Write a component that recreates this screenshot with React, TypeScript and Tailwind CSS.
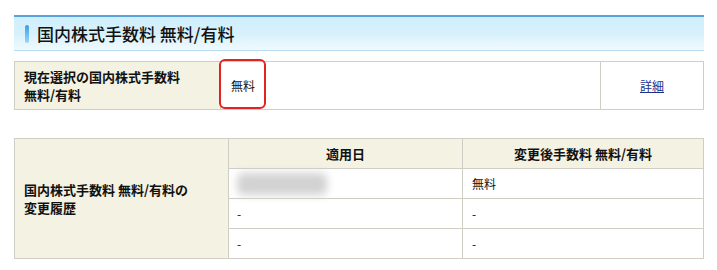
import React from 'react';

const font = { fontFamily: '"Noto Sans CJK JP", "Liberation Sans", sans-serif' };

const History: React.FC = () => {
  const rows = [
    { date: null, fee: '無料' },
    { date: '-', fee: '-' },
    { date: '-', fee: '-' },
  ];
  return (
    <table className="mt-[28px] w-[690px] table-fixed border-collapse text-[12px] text-[#111]">
      <colgroup>
        <col className="w-[214px]" />
        <col className="w-[234px]" />
        <col />
      </colgroup>
      <tbody>
        <tr className="h-[30px]">
          <th
            rowSpan={4}
            className="border border-[#cfcdc4] bg-[#f4f2e3] px-[9px] text-left align-middle text-[13px] font-bold leading-[18px]"
          >
            国内株式手数料 無料/有料の
            <br />
            変更履歴
          </th>
          <th className="border border-[#cfcdc4] bg-[#f4f2e3] text-center text-[13px] font-bold">適用日</th>
          <th className="border border-[#cfcdc4] bg-[#f4f2e3] text-center text-[13px] font-bold">
            変更後手数料 無料/有料
          </th>
        </tr>
        {rows.map((r, i) => (
          <tr key={i} className="h-[30px]">
            <td className="border border-[#cfcdc4] px-[8px]">
              {r.date === null ? (
                <div className="h-[22px] w-[90px] rounded-[6px] bg-[#d2d2d2] blur-[4px]" />
              ) : (
                r.date
              )}
            </td>
            <td className="border border-[#cfcdc4] px-[9px]">{r.fee}</td>
          </tr>
        ))}
      </tbody>
    </table>
  );
};

export default function App() {
  return (
    <div className="min-h-[270px] w-[717px] bg-white pl-[14px] pt-[15px]" style={font}>
      <div className="flex h-[36px] w-[690px] items-center border-t-2 border-b border-t-[#5aa3da] border-b-[#b8dcf0] bg-gradient-to-b from-[#d0effc] via-[#d6f1fc] to-[#f0f9fe] pl-[11px]">
        <div className="h-[18px] w-[4px] rounded-[2px] bg-gradient-to-b from-[#3f9be0] to-[#9ad7f6]" />
        <h1 className="ml-[8px] text-[17px] font-medium leading-none text-[#111]">国内株式手数料 無料/有料</h1>
      </div>

      <div className="relative mt-[10px]">
        <table className="w-[690px] table-fixed border-collapse text-[12px] text-[#111]">
          <colgroup>
            <col className="w-[206px]" />
            <col />
            <col className="w-[103px]" />
          </colgroup>
          <tbody>
            <tr className="h-[48px]">
              <th className="border border-[#cfcdc4] bg-[#f4f2e3] px-[9px] text-left align-middle text-[13px] font-bold leading-[18px]">
                現在選択の国内株式手数料
                <br />
                無料/有料
              </th>
              <td className="border border-[#cfcdc4] px-[10px]">無料</td>
              <td className="border border-[#cfcdc4] text-center">
                <a href="#" className="text-[#1d2f8a] underline">詳細</a>
              </td>
            </tr>
          </tbody>
        </table>
        <div className="pointer-events-none absolute left-[205px] top-[-2px] h-[50px] w-[47px] rounded-[6px] border-2 border-[#e32222]" />
      </div>

      <History />
    </div>
  );
}
